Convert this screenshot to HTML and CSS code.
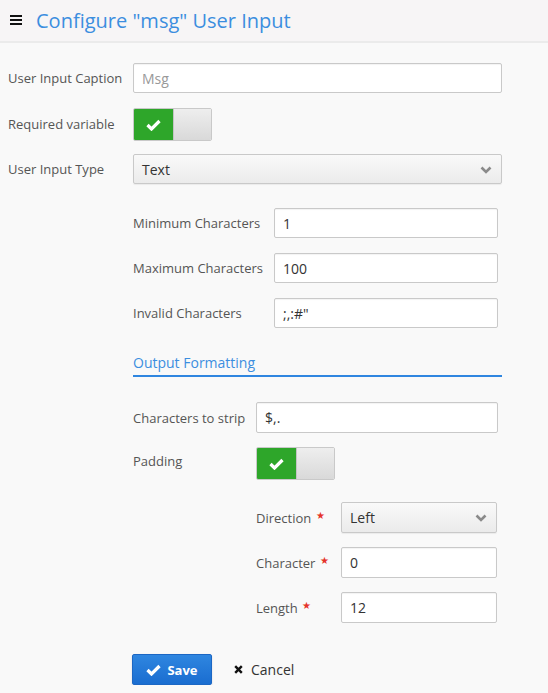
FILE: index.html
```html
<!DOCTYPE html>
<html>
<head>
<meta charset="utf-8">
<link rel="stylesheet" href="styles.css">
</head>
<body>
<header class="topbar">
  <svg class="burger" width="12" height="10" viewBox="0 0 12 10"><rect x="0" y="0" width="12" height="2" fill="#111"/><rect x="0" y="4" width="12" height="2" fill="#111"/><rect x="0" y="8" width="12" height="2" fill="#111"/></svg>
  <h1 class="title">Configure "msg" User Input</h1>
</header>
<main class="form">
  <div class="row r-caption">
    <label class="lbl lbl-main">User Input Caption</label>
    <div class="field placeholder">Msg</div>
  </div>
  <div class="row r-required">
    <label class="lbl lbl-main">Required variable</label>
    <div class="toggle">
      <span class="toggle-on"><svg width="15" height="12" viewBox="0 0 15 12"><path d="M1.5 6 L5.5 10 L13.5 2" fill="none" stroke="#fff" stroke-width="3.2"/></svg></span>
      <span class="toggle-off"></span>
    </div>
  </div>
  <div class="row r-type">
    <label class="lbl lbl-main">User Input Type</label>
    <div class="select">Text<svg class="chev" width="12" height="8" viewBox="0 0 12 8"><path d="M1.5 1.5 L6 6 L10.5 1.5" fill="none" stroke="#8a8a8a" stroke-width="2.6"/></svg></div>
  </div>

  <section class="sub">
    <div class="row r-sub">
      <label class="lbl lbl-sub">Minimum Characters</label>
      <div class="field">1</div>
    </div>
    <div class="row r-sub">
      <label class="lbl lbl-sub">Maximum Characters</label>
      <div class="field">100</div>
    </div>
    <div class="row r-sub last">
      <label class="lbl lbl-sub">Invalid Characters</label>
      <div class="field">;,:#"</div>
    </div>
  </section>

  <section class="fmt">
    <h2 class="fmt-head">Output Formatting</h2>
    <div class="fmt-body">
      <div class="row r-strip">
        <label class="lbl lbl-fmt">Characters to strip</label>
        <div class="field tall">$,.</div>
      </div>
      <div class="row r-padding">
        <label class="lbl lbl-fmt">Padding</label>
        <div class="toggle">
          <span class="toggle-on"><svg width="15" height="12" viewBox="0 0 15 12"><path d="M1.5 6 L5.5 10 L13.5 2" fill="none" stroke="#fff" stroke-width="3.2"/></svg></span>
          <span class="toggle-off"></span>
        </div>
      </div>
      <div class="nested">
        <div class="row r-nest">
          <label class="lbl lbl-nest">Direction <span class="req">★</span></label>
          <div class="select tall">Left<svg class="chev" width="12" height="8" viewBox="0 0 12 8"><path d="M1.5 1.5 L6 6 L10.5 1.5" fill="none" stroke="#8a8a8a" stroke-width="2.6"/></svg></div>
        </div>
        <div class="row r-nest">
          <label class="lbl lbl-nest">Character <span class="req">★</span></label>
          <div class="field tall">0</div>
        </div>
        <div class="row r-nest last">
          <label class="lbl lbl-nest">Length <span class="req">★</span></label>
          <div class="field tall">12</div>
        </div>
      </div>
    </div>
  </section>

  <div class="actions">
    <button class="btn-save"><svg width="15" height="12" viewBox="0 0 15 12"><path d="M1.5 6 L5.5 10 L13.5 2" fill="none" stroke="#fff" stroke-width="3.2"/></svg>Save</button>
    <button class="btn-cancel"><svg width="9" height="9" viewBox="0 0 9 9"><path d="M1.2 1.2 L7.8 7.8 M7.8 1.2 L1.2 7.8" stroke="#111" stroke-width="2.4"/></svg>Cancel</button>
  </div>
</main>
</body>
</html>
```
FILE: styles.css
```css
* { box-sizing: border-box; }
html, body {
  margin: 0;
  padding: 0;
  background: #f9f9f9;
  font-family: "Open Sans", "Liberation Sans", sans-serif;
  color: #333;
}
.topbar {
  height: 43px;
  background: #f7f5f6;
  border-bottom: 2px solid #ebebeb;
  display: flex;
  align-items: center;
  padding-left: 10px;
}
.burger { margin-right: 14px; margin-top: -2px; }
.title {
  margin: 0;
  font-weight: 400;
  font-size: 20px;
  color: #3c8edf;
  line-height: 24px;
  margin-top: 1px;
}
.form {
  padding: 20px 46px 0 8px;
}
.row {
  display: flex;
  align-items: center;
}
.lbl {
  font-size: 13px;
  color: #555;
  flex: none;
  white-space: nowrap;
}
.lbl-main { width: 125px; }
.r-required .lbl { margin-top: -2px; }
.lbl-sub { width: 141px; }
.lbl-fmt { width: 123px; }
.lbl-nest { width: 85px; margin-top: 0; }
.req {
  color: #e5332a;
  font-size: 10px;
  position: relative;
  top: -4px;
  margin-left: 1px;
}
.field, .select {
  flex: 1;
  height: 30px;
  background: #fff;
  border: 1px solid #c9c9c9;
  border-radius: 2px;
  box-shadow: inset 0 1px 1px rgba(0,0,0,0.05);
  font-size: 14px;
  color: #333;
  padding-left: 8px;
  display: flex;
  align-items: center;
}
.field.tall, .select.tall { height: 31px; }
.placeholder { color: #999; }
.select {
  background: linear-gradient(#f9f9f9, #ebebeb);
  justify-content: space-between;
  padding-right: 9px;
  box-shadow: 0 1px 1px rgba(0,0,0,0.06);
}
.chev { margin-top: 1px; }
.toggle {
  display: flex;
  width: 79px;
  height: 33px;
  border: 1px solid #c9c9c9;
  border-radius: 2px;
  overflow: hidden;
}
.toggle-on {
  width: 39px;
  background: #2ea62a;
  display: flex;
  align-items: center;
  justify-content: center;
}
.toggle-off {
  flex: 1;
  background: linear-gradient(#eeeeee, #d9d9d9);
  border-left: 1px solid #c4c4c4;
}
.r-caption { margin-bottom: 15px; }
.r-required { margin-bottom: 13px; }
.r-type { margin-bottom: 24px; }
.sub { margin: 0 4px 0 125px; }
.r-sub { margin-bottom: 15px; }
.r-sub.last { margin-bottom: 0; }
.fmt { margin-left: 125px; }
.fmt-head {
  margin: 25px 0 0 0;
  font-size: 14px;
  font-weight: 400;
  color: #3c8edf;
  line-height: 20px;
  padding-bottom: 2px;
  border-bottom: 2px solid #2f86e0;
}
.fmt-body { margin-right: 4px; margin-top: 25px; }
.r-strip { margin-bottom: 14px; }
.r-padding { margin-bottom: 22px; align-items: flex-start; }
.r-padding .lbl { margin-top: 5px; }
.nested { margin: 0 1px 0 123px; }
.r-nest { margin-bottom: 14px; }
.r-nest.last { margin-bottom: 0; }
.actions {
  margin: 31px 0 0 124px;
  display: flex;
  align-items: center;
}
.btn-save {
  width: 80px;
  height: 31px;
  border: 1px solid #1c67c4;
  border-radius: 2px;
  background: linear-gradient(#2f86e0, #1a6dd0);
  color: #fff;
  font-family: inherit;
  font-weight: 700;
  font-size: 13px;
  display: flex;
  align-items: center;
  justify-content: center;
  gap: 6px;
  padding: 0;
  box-shadow: 0 1px 2px rgba(0,0,0,0.15);
}
.btn-cancel {
  margin-left: 22px;
  background: none;
  border: none;
  font-family: inherit;
  font-size: 14px;
  color: #333;
  display: flex;
  align-items: center;
  gap: 8px;
  padding: 0;
}
```
